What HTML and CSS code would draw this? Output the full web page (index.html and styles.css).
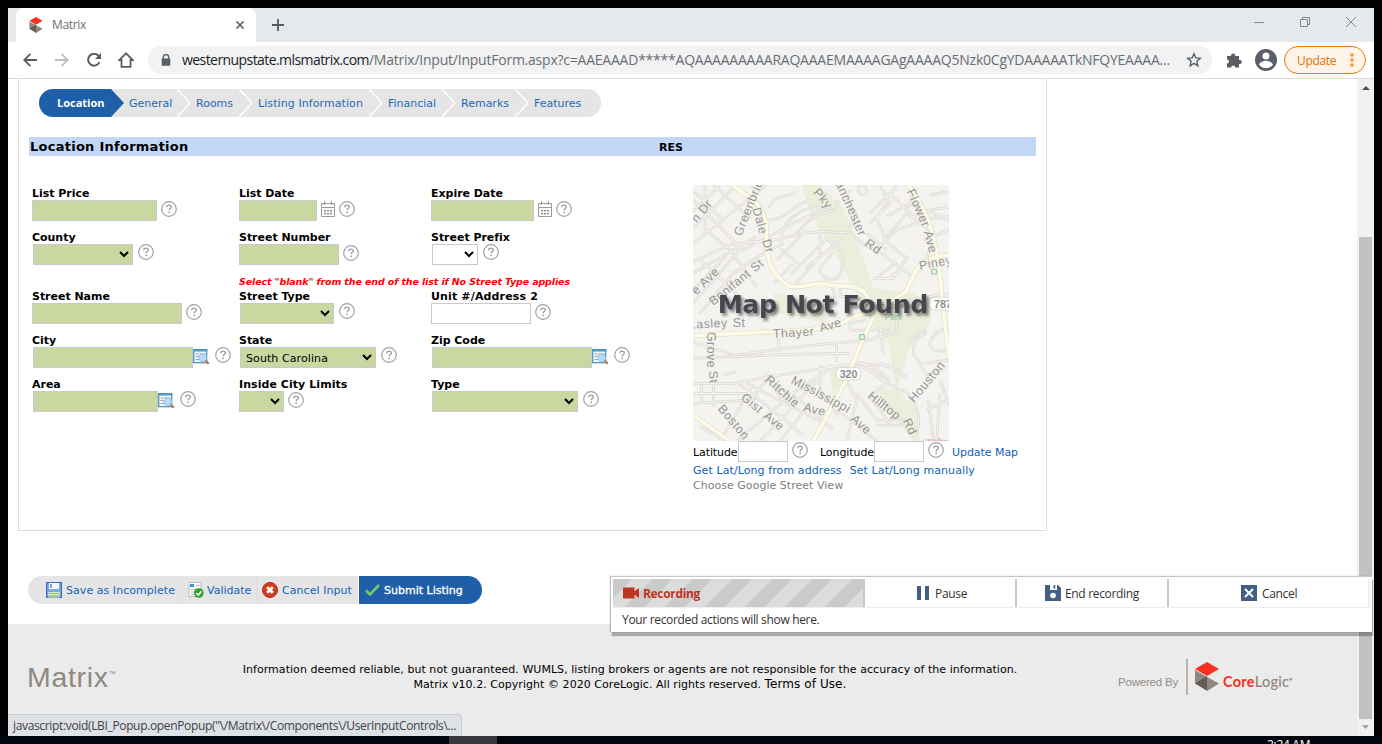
FILE: index.html
```html
<!DOCTYPE html>
<html lang="en">
<head>
<meta charset="utf-8">
<title>Matrix</title>
<link rel="stylesheet" href="styles.css">
</head>
<body>
<svg class="defs" aria-hidden="true">
  <symbol id="help" viewBox="0 0 16 16"><circle cx="8" cy="8" r="7.3" fill="#fff" stroke="#a2a2a2" stroke-width="1.2"/><path d="M5.7 6.3C5.7 4.9 6.7 4.2 8 4.2s2.3.8 2.3 1.9c0 1.5-2.1 1.5-2.1 3.2" fill="none" stroke="#999" stroke-width="1.3"/><rect x="7.4" y="10.6" width="1.5" height="1.5" fill="#999"/></symbol>
  <symbol id="cal" viewBox="0 0 14 16"><path d="M.5 2.5h13v13H.5zM.5 6.5h13M3.5 0v4M10.5 0v4" fill="none" stroke="#999"/><path d="M3 9h2v1.6H3zM6 9h2v1.6H6zM9 9h2v1.6H9zM3 12h2v1.6H3zM6 12h2v1.6H6zM9 12h2v1.6H9z" fill="#8d8d8d"/></symbol>
  <symbol id="lookup" viewBox="0 0 17 17"><rect x=".7" y="1.7" width="13" height="13" fill="#eef5fb" stroke="#4590b8" stroke-width="1.2"/><path d="M0 1h14.4v2.500H0z" fill="#4a9ac4"/><path d="M2.5 6h3M6.5 6h6M2.5 8.500h4M2.5 11.5h4" stroke="#9aa9b5"/><path d="M12.5 12.5l3.2 3.2" stroke="#b5793f" stroke-width="2.2"/><circle cx="9.8" cy="9.8" r="3.8" fill="#b7dbfa" stroke="#8fb7e2" stroke-width=".8"/></symbol>
  <symbol id="cube" viewBox="0 0 24 29"><path d="M12 0l12 7-12 7L0 7z" fill="#f83024"/><path d="M0 8l12 7v14L0 21z" fill="#91867d"/><path d="M12 15l12 6.5L12 29z" fill="#91867d"/><path d="M0 21.5L12 14v14.5z" fill="#655b52"/></symbol>
  <symbol id="sep" viewBox="0 0 13 28"><path d="M0 0h13v28H0z" fill="#e5e5e5"/><path d="M0 0l13 14L0 28" fill="none" stroke="#fff" stroke-width="1.4"/></symbol>
</svg>

<div class="window">
  <div class="tabstrip">
    <div class="tab">
      <svg class="favicon" width="14" height="16" preserveAspectRatio="none"><use href="#cube"/></svg>
      <span class="tab-title">Matrix</span>
      <svg class="tab-close" width="8" height="8" viewBox="0 0 8 8"><path d="M.4.4l7.2 7.2M7.6.4L.4 7.6" stroke="#555" stroke-width="1.5"/></svg>
    </div>
    <svg class="newtab" width="12" height="12" viewBox="0 0 12 12"><path d="M6 0v12M0 6h12" stroke="#55595d" stroke-width="1.8"/></svg>
    <div class="winctl">
      <svg width="10" height="12" viewBox="0 0 10 12"><path d="M0 6.5h10" stroke="#888"/></svg>
      <svg width="10" height="12" viewBox="0 0 10 12"><path d="M.5 3.5h7v7h-7zM2.5 3V1.5h7v7H8" fill="none" stroke="#888"/></svg>
      <svg width="10" height="12" viewBox="0 0 10 12"><path d="M0 1l10 10M10 1L0 11" stroke="#888"/></svg>
    </div>
  </div>

  <div class="toolbar">
    <svg width="14" height="14" viewBox="0 0 14 14"><path d="M14 7H1.5M7.4.8L1.2 7l6.2 6.2" fill="none" stroke="#5a5e62" stroke-width="1.8"/></svg>
    <svg width="14" height="14" viewBox="0 0 14 14"><path d="M0 7h12.5M6.6.8L12.8 7l-6.2 6.2" fill="none" stroke="#bcbdbf" stroke-width="1.8"/></svg>
    <svg width="14" height="14" viewBox="0 0 14 14"><path d="M12.4 9.2A5.9 5.9 0 1 1 11.6 3" fill="none" stroke="#5a5e62" stroke-width="2"/><path d="M14 0v6H8z" fill="#5a5e62"/></svg>
    <svg width="16" height="16" viewBox="0 0 16 16"><path d="M8 1.3L1.2 8h2.3v6.9h9V8h2.3z" fill="none" stroke="#5a5e62" stroke-width="1.8"/></svg>
    <div class="omnibox">
      <svg width="10" height="12" viewBox="0 0 10 12"><path d="M2.3 5V3.2a2.7 2.7 0 0 1 5.4 0V5" fill="none" stroke="#5a5e62" stroke-width="1.4"/><rect x=".7" y="4.5" width="8.6" height="7.3" rx=".8" fill="#5a5e62"/></svg>
      <span class="url"><span class="host">westernupstate.mlsmatrix.com</span><span class="path">/Matrix/Input/InputForm.aspx?c=AAEAAAD*****AQAAAAAAAAARAQAAAEMAAAAGAgAAAAQ5Nzk0CgYDAAAAATkNFQYEAAAA...</span></span>
      <svg class="star" width="16" height="16" viewBox="0 0 16 16"><path d="M8 1.8l1.8 4.1 4.5.4-3.4 3 1 4.4L8 11.4l-3.9 2.3 1-4.4-3.4-3 4.500-.4z" fill="none" stroke="#5a5e62" stroke-width="1.4"/></svg>
    </div>
    <svg class="puzzle" width="16" height="16" viewBox="0 0 16 16"><path d="M1 4h4.2a2 2 0 1 1 3.8 0h4v4a2.1 2.1 0 1 1 0 4v3.5H9.3a2 2 0 0 0-4.1 0H1v-4a2 2 0 0 0 0-4z" fill="#5a5e62"/></svg>
    <svg class="avatar" width="22" height="22" viewBox="0 0 22 22"><circle cx="11" cy="11" r="11" fill="#5a5e68"/><circle cx="11" cy="7" r="3.5" fill="#fff"/><path d="M4 15.5c1-2.7 5-3.8 7-3.8s6 1.100 7 3.800c-1.600 2.300-4.200 3.700-7 3.700s-5.400-1.400-7-3.700z" fill="#fff"/></svg>
    <div class="update"><span>Update</span><svg width="4" height="14" viewBox="0 0 4 14"><path d="M.5.5h3v3h-3zM.5 5.500h3v3h-3zM.5 10.500h3v3h-3z" fill="#f29a1c"/></svg></div>
  </div>

  <div class="viewport">
    <div class="page">
      <div class="panel">
        <div class="crumbs">
          <span class="crumb active">Location</span><svg width="13" height="28" viewBox="0 0 13 28"><path d="M0 0h13v28H0z" fill="#e5e5e5"/><path d="M0 0l13 14L0 28z" fill="#1f5faa"/></svg>
          <span class="crumb c-general">General</span><svg width="13" height="28"><use href="#sep"/></svg>
          <span class="crumb c-rooms">Rooms</span><svg width="13" height="28"><use href="#sep"/></svg>
          <span class="crumb c-listing">Listing Information</span><svg width="13" height="28"><use href="#sep"/></svg>
          <span class="crumb c-std">Financial</span><svg width="13" height="28"><use href="#sep"/></svg>
          <span class="crumb c-std">Remarks</span><svg width="13" height="28"><use href="#sep"/></svg>
          <span class="crumb c-last">Features</span>
        </div>
        <div class="section-bar"><span class="section-title">Location Information</span><span class="section-type">RES</span></div>

        <div class="content">
          <div class="fields">
            <div class="field"><label>List Price</label><div class="ctl"><input class="req w125"><svg class="help"><use href="#help"/></svg></div></div>
            <div class="field"><label>List Date</label><div class="ctl"><input class="req w78"><svg class="cal"><use href="#cal"/></svg><svg class="help"><use href="#help"/></svg></div></div>
            <div class="field"><label>Expire Date</label><div class="ctl"><input class="req w103"><svg class="cal"><use href="#cal"/></svg><svg class="help"><use href="#help"/></svg></div></div>

            <div class="field"><label>County</label><div class="ctl sel"><select class="req w100"><option></option></select><svg class="help"><use href="#help"/></svg></div></div>
            <div class="field"><label>Street Number</label><div class="ctl"><input class="req w100"><svg class="help"><use href="#help"/></svg></div></div>
            <div class="field"><label>Street Prefix</label><div class="ctl sel"><select class="w46"><option></option></select><svg class="help"><use href="#help"/></svg></div></div>

            <div class="note">Select "blank" from the end of the list if No Street Type applies</div>

            <div class="field"><label>Street Name</label><div class="ctl"><input class="req w150"><svg class="help"><use href="#help"/></svg></div></div>
            <div class="field"><label>Street Type</label><div class="ctl sel"><select class="req w94"><option></option></select><svg class="help"><use href="#help"/></svg></div></div>
            <div class="field"><label class="wide">Unit #/Address 2</label><div class="ctl"><input class="w100"><svg class="help"><use href="#help"/></svg></div></div>

            <div class="field"><label>City</label><div class="ctl sel"><input class="req w160"><svg class="lookup"><use href="#lookup"/></svg><svg class="help"><use href="#help"/></svg></div></div>
            <div class="field"><label>State</label><div class="ctl sel"><select class="req w136"><option>South Carolina</option></select><svg class="help"><use href="#help"/></svg></div></div>
            <div class="field"><label>Zip Code</label><div class="ctl sel"><input class="req w160"><svg class="lookup"><use href="#lookup"/></svg><svg class="help"><use href="#help"/></svg></div></div>

            <div class="field"><label>Area</label><div class="ctl sel"><input class="req w125"><svg class="lookup"><use href="#lookup"/></svg><svg class="help"><use href="#help"/></svg></div></div>
            <div class="field"><label class="limits">Inside City Limits</label><div class="ctl"><select class="req w45"><option></option></select><svg class="help"><use href="#help"/></svg></div></div>
            <div class="field"><label>Type</label><div class="ctl sel"><select class="req w146"><option></option></select><svg class="help"><use href="#help"/></svg></div></div>
          </div>

          <div class="mapcol">
            <svg class="map" width="256" height="256" viewBox="39 15 768 768">
              <defs>
                <filter id="shadow" x="-10%" y="-30%" width="120%" height="180%"><feDropShadow dx="7" dy="8" stdDeviation="5" flood-color="#000" flood-opacity=".5"/></filter>
                <g id="minor">
                  <path d="M39 60l150 150 250-130M75 15v130l80 70M39 145l130-130M39 190l220-175M100 15l110 100M39 30l90 90M120 15l-80 80M39 245l110-50 80-10 70-8 60-15 60-8 90 5M39 280l190-110M60 400l100-120 90-60 60-30M39 330l100-100M150 210l80 110M60 240l130 120M39 370l140-160"/>
                  <path d="M265 85c30-50 60-30 80-50M265 120c50 0 70-40 120-60M300 185c10-60 40-90 120-110M345 165c30-30 40-60 110-70M375 265l115-90M330 285l110-110M290 240l90-90M420 155v75l-80 90M440 175c50 30 60 60 40 110-20 30-70 0-60-20l40-50M280 310l60-60M455 310l10 40-60 50M300 205l60 50"/>
                  <path d="M510 30c-20 40 10 50 20 75l-25 45 40 40 60 30 50 40 50 35M570 100l60-60 70 70 50-20 57-8M560 30c-5-20-30-20-25 0s30 20 25 0M600 15l30 55-60 60M650 15l-60 100 30 70 60 50-40 60-60 0M700 30l-20 70-70 80M620 110l70-40 117 50M590 210l60-60 60-20M560 160l60 50M720 120l87-10M730 180l77-30"/>
                  <path d="M39 535l280-12 190-3M39 485l120 40 240-30 170-15 90-25M39 610l120 0 110-20 260-40 100 8 50 35M295 475v55M470 485v60M39 670l170-10 60-70M65 610v60M39 640l170 0M100 610v70M130 585l40-10M255 575l50 85 140-90M420 555v75l55 80M170 605l200 160M200 610l250 130M250 590l120 80 90 80M120 783l100-170M170 783l190-160M240 783l170-180M60 740l80 43M300 783l80-100M440 560c60 0 100-20 150 30l70 40"/>
                  <path d="M510 450v-20l50-10M510 450h110M570 480l60-30M540 545l80 60-50 45 60 80M500 600l30 60-30 123M530 640l60 80h100M590 735h90M470 690l70 50 50 43M580 560l50 40M600 550l60 25M660 630c30 0 70 70 50 130M740 460c-40 10-50 60-30 75l30 50 57-20M807 540l-75 10M807 510c-90 20-60-60 0-65M690 480l50-30M780 600l27 80M740 690l67-30M745 660l15 123M780 640l-10 143"/>
                  <path d="M590 295l60-50M620 300l40-30M470 60c10 20 0 40-30 20M740 240l20-80-80-60M750 45l57-10M685 360l122-20M650 400v50M600 440l10 80M520 350h-40v-25"/>
                </g>
                <g id="major">
                  <path d="M155 15c55 40 100 55 105 130-5 90 10 135 65 172 40 15 90-20 130 0 50 0 95 0 110 40"/>
                  <path d="M685 15c60 80 90 170 100 330l22 190"/>
                  <path d="M807 225c-110 10-100 60-130 110l-90 60c-40 90-70 150-80 190L400 783"/>
                  <path d="M39 467l340-17c60-10 100-10 130-35 25-15 50-10 80-20M39 705l110 78"/>
                </g>
              </defs>
              <path d="M39 15h768v768H39z" fill="#f5f3f0"/>
              <g fill="#ebeedb">
                <path d="M365 15h55l70 70 60 150 30 90 120 15 50 30v60l-60 70-40 130 20 60-50-10-30-30 55-20-15-130-50-60-50-100-70-130-45-70-35-70z"/>
                <path d="M283 338l155 30v60l-155-30zM445 555h75l-60 90zM590 620l70 15 45 50 15 98h-20l-30-40-50-50z"/>
              </g>
              <use href="#minor" fill="none" stroke="#dad7d3" stroke-width="8"/>
              <use href="#minor" fill="none" stroke="#f5f3f0" stroke-width="3.500"/>
              <use href="#major" fill="none" stroke="#e0deca" stroke-width="15"/>
              <use href="#major" fill="none" stroke="#fbfbe6" stroke-width="11"/>
              <g class="street">
                <text transform="translate(50 130) rotate(-50)">n Dr</text>
                <text transform="translate(184 170) rotate(-68)">Greenbrier</text>
                <text transform="translate(217 86) rotate(74)">Dale</text>
                <text transform="translate(246 182) rotate(72)">Dr</text>
                <text transform="translate(398 38) rotate(50)">Pky</text>
                <text transform="translate(466 10) rotate(66)">anchester</text>
                <text transform="translate(552 195) rotate(35)">Rd</text>
                <text transform="translate(680 34) rotate(66)">Flower</text>
                <text transform="translate(732 156) rotate(76)">Ave</text>
                <text transform="translate(720 270) rotate(-11)">Piney</text>
                <text transform="translate(49 346) rotate(-44)">e Ave</text>
                <text transform="translate(100 378) rotate(-39)">Bonifant St</text>
                <text transform="translate(38 446) rotate(-3)">.asley</text>
                <text transform="translate(158 440)">St</text>
                <text transform="translate(280 474) rotate(-4)">Thayer</text>
                <text transform="translate(422 456) rotate(-16)">Ave</text>
                <text transform="translate(80 456) rotate(90)">Grove</text>
                <text transform="translate(87 573) rotate(86)">St</text>
                <text transform="translate(253 602) rotate(42)">Ritchie</text>
                <text transform="translate(368 692) rotate(14)">Ave</text>
                <text transform="translate(331 608) rotate(28)">Mississippi</text>
                <text transform="translate(510 720) rotate(42)">Ave</text>
                <text transform="translate(181 656) rotate(40)">Gist</text>
                <text transform="translate(248 712) rotate(38)">Ave</text>
                <text transform="translate(112 687) rotate(50)">Boston</text>
                <text transform="translate(561 652) rotate(38)">Hilltop</text>
                <text transform="translate(668 722) rotate(65)">Rd</text>
                <text transform="translate(702 670) rotate(-50)">Houston</text>
              </g>
              <text x="556" y="388" class="park">Sligo Creek</text><text x="614" y="421" class="park">Park</text>
              <path d="M755 268h14v14h-14zM539 464h14v14h-14z" fill="#e5f3df" stroke="#8fc896" stroke-width="3"/>
              <g fill="#fff" stroke="#cdcac0" stroke-width="2"><rect x="469" y="562" width="73" height="38" rx="16"/><rect x="748" y="352" width="80" height="38" rx="16"/></g>
              <text x="479" y="593" class="route">320</text><text x="762" y="383" class="route">787</text>
              <text x="736" y="794" class="walter">Walter</text>
              <text x="113" y="400" class="notfound" filter="url(#shadow)">Map Not Found</text>
            </svg>
            <div class="latlong"><span class="lat">Latitude</span><input class="w50"><svg class="help"><use href="#help"/></svg><span class="lon">Longitude</span><input class="w50"><svg class="help"><use href="#help"/></svg><a class="upd">Update Map</a></div>
            <div class="maplinks"><a>Get Lat/Long from address</a><a>Set Lat/Long manually</a></div>
            <div class="streetview">Choose Google Street View</div>
          </div>
        </div>
      </div>

      <div class="actions">
        <div class="act save"><svg width="16" height="16" viewBox="0 0 16 16"><path d="M.6.6h14.8v14.8H.6z" fill="#7fa9e3" stroke="#3f6fbd" stroke-width="1.2"/><path d="M3 1h10v6H3z" fill="#f7fafe"/><path d="M5 2v4" stroke="#4a78be" stroke-width="1.4"/><path d="M2.500 10h11v5.500h-11z" fill="#f6fbef"/><path d="M3 11.500h10M3 14h10" stroke="#8bc46c" stroke-width="1.500"/></svg><span>Save as Incomplete</span></div>
        <div class="act validate"><svg width="16" height="16" viewBox="0 0 16 16"><path d="M1 .5h12v14H1z" fill="#fdfdfd" stroke="#bcbcbc"/><path d="M2 2h4v3H2z" fill="#3d8fd0"/><path d="M7.500 3.500h4M3 7.500h8M3 10h4M3 12.500h3" stroke="#b3bbc3"/><circle cx="10.800" cy="11" r="4.800" fill="#25a32c"/><path d="M8.300 11l2 2 3.200-3.800" fill="none" stroke="#fff" stroke-width="1.700"/></svg><span>Validate</span></div>
        <div class="act cancel"><svg width="16" height="16" viewBox="0 0 16 16"><circle cx="8" cy="8" r="7.500" fill="#d13d20" stroke="#a92c18"/><path d="M5.200 5.200l5.600 5.600M10.800 5.200l-5.600 5.600" stroke="#fff" stroke-width="2.700"/></svg><span>Cancel Input</span></div>
        <div class="act submit"><svg width="15" height="12" viewBox="0 0 15 12"><path d="M1 6.500l4 4L14 1" fill="none" stroke="#7cc66c" stroke-width="2.600"/></svg><span>Submit Listing</span></div>
      </div>

      <div class="footer">
        <div class="brand">Matrix<sup>™</sup></div>
        <div class="legal"><div class="disclaimer">Information deemed reliable, but not guaranteed. WUMLS, listing brokers or agents are not responsible for the accuracy of the information.</div><div>Matrix v10.2. Copyright © 2020 CoreLogic. All rights reserved. <span class="terms">Terms of Use.</span></div></div>
        <div class="powered"><span class="by">Powered By</span><span class="rule"></span><svg width="24" height="29"><use href="#cube"/></svg><span class="core">Core<span>Logic</span><sup>•</sup></span></div>
      </div>
    </div>
    <div class="scrollbar">
      <svg width="17" height="17" viewBox="0 0 17 17"><path d="M5 11l4-4 4 4z" fill="#505050"/></svg>
      <div class="thumb"></div>
      <svg width="17" height="17" viewBox="0 0 17 17"><path d="M5 6h7L8.500 10z" fill="#a3a3a3"/></svg>
    </div>
  </div>
  <div class="status">javascript:void(LBI_Popup.openPopup("\/Matrix\/Components\/UserInputControls\...</div>
</div>

<div class="recorder">
  <div class="rec-row">
    <div class="rec-main"><svg width="16" height="12" viewBox="0 0 16 12"><path d="M1 .5h10.500v3.800L16 1v10l-4.500-3.300v3.800H1a1 1 0 0 1-1-1v-9a1 1 0 0 1 1-1z" fill="#bd3620"/></svg><b>Recording</b></div>
    <div class="rec-btn pause"><svg width="12" height="14" viewBox="0 0 12 14"><path d="M0 0h4v14H0zM8 0h4v14H8z" fill="#436084"/></svg><span>Pause</span></div>
    <div class="rec-btn end"><svg width="16" height="16" viewBox="0 0 16 16"><path d="M0 0h13l3 3v13H0z" fill="#436084"/><path d="M5 0h7v5H5z" fill="#fff"/><path d="M8.500 0h1.700v3.700H8.500z" fill="#436084"/><circle cx="8" cy="10.500" r="2.800" fill="#fff"/></svg><span>End recording</span></div>
    <div class="rec-btn quit"><svg width="16" height="16" viewBox="0 0 16 16"><path d="M0 0h16v16H0z" fill="#436084"/><path d="M4 4l8 8M12 4l-8 8" stroke="#fff" stroke-width="2"/></svg><span>Cancel</span></div>
  </div>
  <div class="rec-text">Your recorded actions will show here.</div>
</div>

<div class="taskbar"><div class="task"></div><div class="clock">2:24 AM</div></div>
</body>
</html>
```
FILE: styles.css
```css
* { box-sizing: border-box; }
body {
  margin: 0;
  width: 1382px;
  height: 744px;
  padding: 8px 8px 0;
  overflow: hidden;
  background: #000;
  font: 11px/15px "DejaVu Sans", sans-serif;
  color: #000;
}
svg { display: block; flex: none; }
.defs { position: absolute; width: 0; height: 0; }

.window {
  position: relative;
  height: 728px;
  display: flex;
  flex-direction: column;
  background: #fff;
}

/* browser chrome */
.tabstrip, .toolbar, .status, .recorder {
  font-family: "Open Sans", sans-serif;
  font-size: 12px;
  letter-spacing: -0.33px;
}
.tabstrip {
  height: 34px;
  display: flex;
  align-items: center;
  background: #e5e9ec;
  padding-left: 8px;
}
.tab {
  width: 240px;
  height: 34px;
  display: flex;
  align-items: center;
  padding: 0 12px;
  border-radius: 8px 8px 0 0;
  background: #fff;
  color: #6b6d70;
}
.favicon { margin: 0 9px 0 1px; }
.tab-title { flex: 1; margin-top: -2px; }
.newtab { margin-left: 16px; }
.winctl {
  margin-left: auto;
  display: flex;
  gap: 36px;
  padding-right: 18px;
  height: 24px;
}
.winctl svg { margin-top: 3px; }
.toolbar {
  height: 37px;
  display: flex;
  align-items: center;
  padding: 0 8px 0 15px;
  border-bottom: 1px solid #dadbdd;
}
.toolbar > svg { margin-right: 18px; }
.toolbar > svg:nth-child(3) { margin-right: 17px; }
.toolbar > svg:nth-child(4) { margin-right: 14px; }
.omnibox {
  width: 1064px;
  height: 28px;
  display: flex;
  align-items: center;
  padding: 0 10px 0 13px;
  border-radius: 14px;
  background: #f1f2f4;
  font-size: 14px;
}
.url { margin: -2px 0 0 11px; white-space: nowrap; }
.host { color: #202124; letter-spacing: -0.57px; }
.path { color: #6b6d70; letter-spacing: -0.23px; }
.star { margin-left: auto; }
.toolbar > .puzzle { margin: 0 13px 0 14px; }
.toolbar > .avatar { margin-right: 7px; }
.update {
  width: 82px;
  height: 28px;
  display: flex;
  align-items: center;
  justify-content: space-between;
  padding: 0 11px 0 12px;
  border: 1px solid #e67c0c;
  border-radius: 14px;
  background: #fdf3e8;
  color: #e37400;
}

/* page */
.viewport { flex: 1; display: flex; }
.page { width: 1349px; display: flex; flex-direction: column; }
.panel {
  width: 1029px;
  height: 452px;
  margin-left: 10px;
  padding: 10px;
  border: 1px solid #dcdcdc;
  border-top: 0;
}
.crumbs { display: flex; height: 28px; padding-left: 10px; color: #1f69b5; }
.crumb { background: #e5e5e5; line-height: 29px; padding-left: 6px; white-space: nowrap; }
.crumb.active {
  width: 72px;
  padding-left: 18px;
  border-radius: 14px 0 0 14px;
  background: #1f5faa;
  color: #fff;
  font: bold 11px/27px "Open Sans", sans-serif;
}
.c-general { width: 53px; padding-left: 5px; }
.c-rooms { width: 49px; }
.c-listing { width: 117px; letter-spacing: 0.08px; }
.c-std { width: 60px; }
.c-last { width: 73px; border-radius: 0 14px 14px 0; }
.section-bar {
  height: 19px;
  margin-top: 20px;
  display: flex;
  line-height: 19px;
  background: #c2d7f6;
  font-weight: bold;
}
.section-title { width: 630px; padding-left: 1px; font-size: 13px; letter-spacing: 0.26px; }
.section-type { line-height: 21px; }

.content { display: flex; padding: 29px 0 0 3px; }
.fields {
  width: 661px;
  display: grid;
  grid-template-columns: 207px 192px 1fr;
  grid-auto-rows: max-content;
  align-content: start;
}
.field { height: 44px; padding-top: 1px; }
label { display: block; height: 14px; line-height: 16px; font-weight: bold; letter-spacing: -0.03px; }
.wide { letter-spacing: 0.15px; }
.limits { letter-spacing: 0.06px; }
.ctl { display: flex; gap: 4px; }
.ctl.sel { gap: 5px; padding-left: 1px; }
input, select {
  display: block;
  height: 21px;
  margin: 0;
  border: 1px solid #c9c9c9;
  border-radius: 0;
  outline: 0;
  background: #fff;
  color: #000;
  font: 11px "DejaVu Sans", sans-serif;
}
select { padding: 1px 1px 0; letter-spacing: 0.09px; }
.req { background-color: #c9d7a0; }
.w45 { width: 45px; } .w46 { width: 46px; } .w50 { width: 50px; } .w78 { width: 78px; }
.w94 { width: 94px; } .w100 { width: 100px; } .w103 { width: 103px; } .w125 { width: 125px; }
.w136 { width: 136px; } .w146 { width: 146px; } .w150 { width: 150px; } .w160 { width: 160px; }
.help { width: 16px; height: 16px; margin-top: 1px; }
.sel .help { margin-top: 0; }
.cal { width: 14px; height: 16px; margin-top: 1px; }
.lookup { width: 17px; height: 17px; margin: 1px 0 0 -5px; }
.note {
  grid-column: 2 / 4;
  height: 15px;
  line-height: 17px;
  font-size: 9.5px;
  font-style: italic;
  font-weight: bold;
  letter-spacing: -0.12px;
  color: #f00;
  white-space: nowrap;
}

.latlong { display: flex; height: 21px; line-height: 23px; }
.lat { width: 45px; letter-spacing: -0.1px; }
.latlong .help { margin-left: 4px; }
.lon { margin-left: 12px; width: 54px; letter-spacing: -0.08px; }
.upd { margin-left: 8px; letter-spacing: -0.05px; }
a { color: #0f62b8; }
.maplinks { display: flex; gap: 8px; padding-top: 1px; line-height: 15px; letter-spacing: 0.09px; }
.streetview { color: #808080; line-height: 15px; letter-spacing: 0.03px; }
.mapcol { white-space: nowrap; }
.street { font: 37px "Liberation Sans", sans-serif; fill: #969696; letter-spacing: 1.5px; }
.park { font: bold 25px "Liberation Sans", sans-serif; fill: #a9cba9; }
.route { font: bold 32px "Liberation Sans", sans-serif; fill: #8c8c8c; }
.walter { font: bold 26px "Liberation Sans", sans-serif; fill: #cfa9a9; }
.notfound { font: bold 76px "DejaVu Sans", sans-serif; fill: #48444f; letter-spacing: -1.5px; }

.actions { display: flex; margin: 45px 0 20px 20px; height: 28px; color: #1463b8; }
.act { display: flex; align-items: center; gap: 4px; background: #e5e5e5; white-space: nowrap; }
.save { width: 153px; padding-left: 18px; border-radius: 14px 0 0 14px; letter-spacing: 0.05px; }
.validate { width: 75px; padding-left: 6px; gap: 3px; border-left: 1px solid #dedede; }
.cancel { width: 102px; padding-left: 5px; border-left: 1px solid #dedede; letter-spacing: 0.06px; }
.submit {
  width: 123px;
  margin-left: 1px;
  padding-left: 6px;
  border-radius: 0 14px 14px 0;
  background: #1f5faa;
  color: #fff;
  -webkit-text-stroke: 0.3px #fff;
}

.footer {
  flex: 1;
  display: grid;
  grid-template-columns: 220px 804px 1fr;
  background: #ebebeb;
}
.brand {
  padding: 37px 0 0 19px;
  font: 28.5px/32px "Liberation Sans", sans-serif;
  letter-spacing: 0.7px;
  color: #8f8880;
}
.brand sup { font-size: 7px; line-height: 0; vertical-align: 11px; letter-spacing: 0; }
.legal { padding-top: 38px; text-align: center; letter-spacing: 0.047px; white-space: nowrap; }
.terms { font-size: 12px; letter-spacing: 0.09px; }
.powered { display: flex; align-items: center; height: 36px; margin: 35px 0 0 86px; }
.by { width: 68px; padding-top: 10px; font: 11.5px/14px "Liberation Sans", sans-serif; letter-spacing: -0.2px; color: #948b84; }
.rule { width: 2px; height: 36px; margin-right: 7px; background: #bfb4ad; }
.powered svg { margin-bottom: 2px; }
.core { margin: 10px 0 0 4px; font: bold 14.5px/16px Lato, sans-serif; letter-spacing: 0.25px; color: #f83024; }
.core > span { font-weight: 500; color: #91867d; }
.core sup { font-size: 5px; line-height: 0; color: #91867d; }

.scrollbar { width: 17px; background: #f1f1f1; display: flex; flex-direction: column; }
.thumb { width: 13px; height: 482px; margin: 141px 0 0 2px; background: #c1c1c1; }

/* overlays */
.status {
  position: absolute;
  left: 0;
  bottom: 0;
  width: 454px;
  height: 22px;
  padding-left: 5px;
  border: 1px solid #c8cbd0;
  border-width: 1px 1px 0 0;
  border-radius: 0 4px 0 0;
  background: #dee1e6;
  color: #3f4144;
  line-height: 22px;
  letter-spacing: -0.345px;
  white-space: nowrap;
}
.recorder {
  position: absolute;
  left: 611px;
  top: 576px;
  width: 761px;
  height: 56px;
  padding: 2px;
  background: #fff;
  border-top: 1px solid #c8c8c8;
  box-shadow: 1px 4px 1px rgba(0, 0, 0, 0.28), -1px 0 1px rgba(0, 0, 0, 0.25);
  color: #333;
}
.rec-row { display: flex; height: 29px; border-bottom: 1px solid #eee; }
.rec-main {
  width: 252px;
  height: 28px;
  display: flex;
  align-items: center;
  gap: 4px;
  padding-left: 10px;
  border-right: 2px solid #c8c8c8;
  background: repeating-linear-gradient(135deg, #cacaca 0 14.140px, #dcdcdc 14.140px 28.280px);
  color: #bd3620;
}
.rec-btn { display: flex; align-items: center; border-right: 2px solid #c8c8c8; }
.pause { width: 152px; gap: 6px; padding-left: 52px; }
.end { width: 152px; gap: 4px; padding-left: 28px; }
.quit { width: 201px; gap: 5px; padding-left: 72px; border-right-color: #f0f0f0; }
.rec-text { padding-left: 9px; line-height: 23px; }

.taskbar { display: flex; height: 8px; margin: 0 -8px; overflow: hidden; background: #02050b; }
.task { width: 48px; margin-left: 449px; background: #36383b; }
.clock { margin-left: 770px; padding-top: 2px; font: 12px/14px "Open Sans", sans-serif; letter-spacing: -0.3px; color: #fff; }
```
